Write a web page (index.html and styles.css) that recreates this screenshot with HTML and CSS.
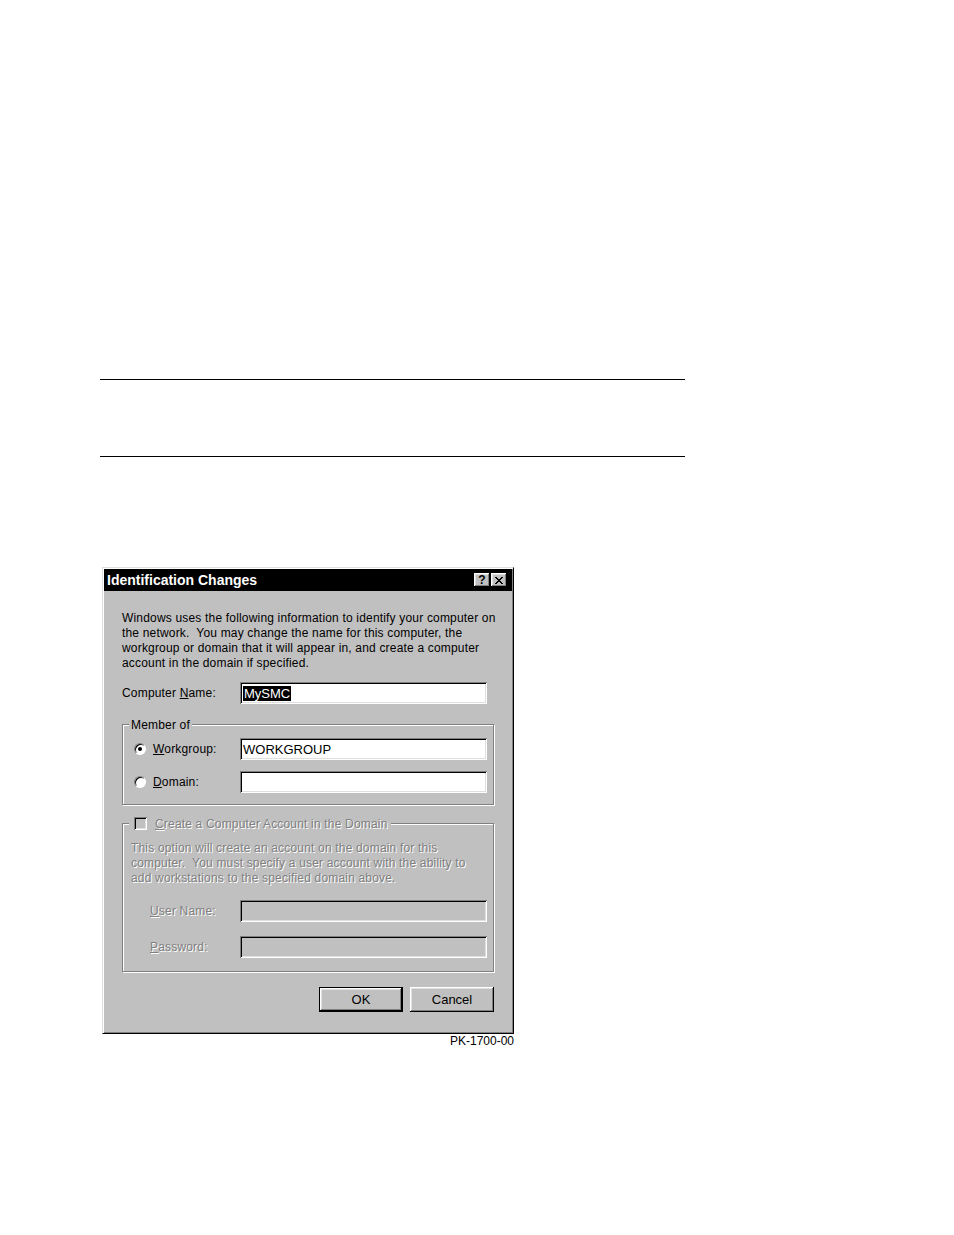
FILE: index.html
```html
<!DOCTYPE html>
<html>
<head>
<meta charset="utf-8">
<title>Identification Changes</title>
<link rel="stylesheet" href="styles.css">
</head>
<body>
<div class="page">
  <div class="rule-box"></div>
  <figure class="figure">
    <div class="dialog">
      <div class="titlebar">
        <span class="title">Identification Changes</span>
        <div class="tbtns">
          <span class="tbtn tbtn-help">?</span>
          <span class="tbtn">
            <svg width="8" height="7" viewBox="0 0 8 7"><path d="M0 0h2v1h1v1h2v-1h1v-1h2v1h-1v1h-1v1h-1v1h1v1h1v1h1v1h-2v-1h-1v-1h-2v1h-1v1h-2v-1h1v-1h1v-1h1v-1h-1v-1h-1v-1h-1z" fill="#000"/></svg>
          </span>
        </div>
      </div>
      <div class="body">
        <p class="intro">Windows uses the following information to identify your computer on<br>the network.&nbsp; You may change the name for this computer, the<br>workgroup or domain that it will appear in, and create a computer<br>account in the domain if specified.</p>

        <div class="row name-row">
          <span class="lbl">Computer <u>N</u>ame:</span>
          <div class="input"><span class="sel">MySMC</span></div>
        </div>

        <div class="group member">
          <div class="group-label">Member of</div>
          <div class="row member-row first">
            <span class="radio-label"><span class="radio checked"></span><span><u>W</u>orkgroup:</span></span>
            <div class="input">WORKGROUP</div>
          </div>
          <div class="row member-row">
            <span class="radio-label"><span class="radio"></span><span><u>D</u>omain:</span></span>
            <div class="input"></div>
          </div>
        </div>

        <div class="group account">
          <div class="group-label check-label"><span class="check"></span><span class="dis"><u>C</u>reate a Computer Account in the Domain</span></div>
          <p class="desc dis">This option will create an account on the domain for this<br>computer.&nbsp; You must specify a user account with the ability to<br>add workstations to the specified domain above.</p>
          <div class="row account-row">
            <span class="dis"><u>U</u>ser Name:</span>
            <div class="input disabled"></div>
          </div>
          <div class="row account-row">
            <span class="dis"><u>P</u>assword:</span>
            <div class="input disabled"></div>
          </div>
        </div>

        <div class="buttons">
          <button class="btn default">OK</button>
          <button class="btn">Cancel</button>
        </div>
      </div>
    </div>
    <figcaption class="caption">PK-1700-00</figcaption>
  </figure>
</div>
</body>
</html>
```

FILE: styles.css
```css
body {
  margin: 0;
  background: #fff;
  font-family: "Liberation Sans", Arial, sans-serif;
  color: #000;
}

.page {
  padding: 379px 0 0 100px;
}

.rule-box {
  width: 585px;
  height: 76px;
  border-top: 1px solid #000;
  border-bottom: 1px solid #000;
}

.figure {
  margin: 110px 0 0 2px;
  width: 412px;
}

.dialog {
  box-sizing: border-box;
  width: 412px;
  background: #c0c0c0;
  border: 1px solid;
  border-color: #dfdfdf #000 #000 #dfdfdf;
  padding: 1px;
  box-shadow: inset 1px 1px #fff, inset -1px -1px #808080;
  font-size: 12px;
}

.titlebar {
  height: 22px;
  background: #000;
  color: #fff;
  display: flex;
  align-items: center;
  justify-content: space-between;
  padding: 0 5px 0 3px;
}

.title {
  font-size: 14px;
  font-weight: bold;
}

.tbtns {
  display: flex;
  gap: 1px;
}

.tbtn {
  width: 16px;
  height: 14px;
  box-sizing: border-box;
  background: #c0c0c0;
  box-shadow: inset -1px -1px #000, inset 1px 1px #fff, inset -2px -2px #808080, inset 2px 2px #dfdfdf;
  display: flex;
  align-items: center;
  justify-content: center;
  color: #000;
}

.tbtn-help {
  font-size: 12px;
  font-weight: bold;
  line-height: 14px;
}

.body {
  padding: 20px 18px 20px;
  letter-spacing: 0.18px;
}

.intro {
  margin: 0;
  line-height: 15px;
  white-space: nowrap;
}

.row {
  display: grid;
  align-items: center;
}

.name-row {
  grid-template-columns: 118px 247px;
  margin-top: 11px;
}

.input {
  height: 22px;
  box-sizing: border-box;
  background: #fff;
  box-shadow: inset 1px 1px #808080, inset -1px -1px #fff, inset 2px 2px #000, inset -2px -2px #dfdfdf;
  padding: 0 3px;
  font-size: 13px;
  letter-spacing: 0;
  display: flex;
  align-items: center;
}

.input.disabled {
  background: #c0c0c0;
}

.sel {
  background: #000;
  color: #fff;
  padding: 0 1px;
  line-height: 15px;
}

.group {
  border: 1px solid #808080;
  box-shadow: 1px 1px #fff, inset 1px 1px #fff;
}

.group-label {
  display: flex;
  align-items: center;
  width: max-content;
  height: 15px;
  margin: -8px 0 0 6px;
  padding: 0 2px;
  background: #c0c0c0;
}

.member {
  margin-top: 20px;
  padding-bottom: 11px;
}

.member-row {
  margin-left: 11px;
  grid-template-columns: 106px 247px;
  margin-top: 11px;
}

.member-row.first {
  margin-top: 6px;
}

.radio-label {
  display: flex;
  align-items: center;
  gap: 7px;
}

.radio {
  width: 12px;
  height: 12px;
  box-sizing: border-box;
  border-radius: 50%;
  border: 1px solid;
  border-color: #808080 #fff #fff #808080;
  background: #fff;
  box-shadow: inset 1px 1px #000;
  display: flex;
  align-items: center;
  justify-content: center;
}

.radio.checked::after {
  content: "";
  width: 4px;
  height: 4px;
  border-radius: 50%;
  background: #000;
}

.account {
  margin-top: 18px;
  padding-bottom: 13px;
}

.check-label {
  padding: 0 4px 0 5px;
}

.check {
  width: 13px;
  height: 13px;
  box-sizing: border-box;
  background: #c0c0c0;
  box-shadow: inset 1px 1px #808080, inset -1px -1px #fff, inset 2px 2px #000, inset -2px -2px #dfdfdf;
  margin-right: 8px;
}

.dis {
  color: #808080;
  text-shadow: 1px 1px 0 #fff;
}

.desc {
  margin: 10px 0 0 8px;
  line-height: 15px;
  white-space: nowrap;
}

.account-row {
  margin: 14px 0 0 27px;
  grid-template-columns: 90px 247px;
}

.buttons {
  display: flex;
  justify-content: flex-end;
  gap: 7px;
  margin-top: 15px;
}

.btn {
  width: 84px;
  height: 25px;
  box-sizing: border-box;
  border: 0;
  padding: 0;
  background: #c0c0c0;
  color: #000;
  font-family: "Liberation Sans", Arial, sans-serif;
  font-size: 13px;
  letter-spacing: 0;
  box-shadow: inset -1px -1px #000, inset 1px 1px #fff, inset -2px -2px #808080, inset 2px 2px #dfdfdf;
}

.btn.default {
  border: 1px solid #000;
}

.caption {
  text-align: right;
  font-size: 12px;
  line-height: 14px;
}
```
